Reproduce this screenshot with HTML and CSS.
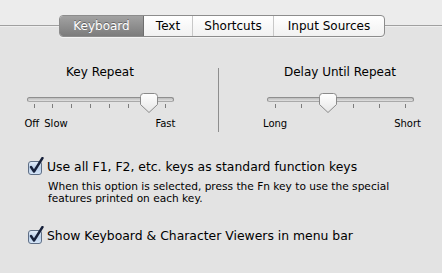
FILE: index.html
```html
<!DOCTYPE html>
<html lang="en">
<head>
    <meta charset="UTF-8">
    <title>Keyboard</title>
    <link rel="stylesheet" href="styles.css">
</head>
<body>

    <div class="tabbar">
        <div class="tabs">
            <span class="tab tab-keyboard active">Keyboard</span>
            <span class="tab tab-text">Text</span>
            <span class="tab tab-shortcuts">Shortcuts</span>
            <span class="tab tab-sources">Input Sources</span>
        </div>
    </div>

    <div class="sliders">
        <div class="slider-group">
            <div class="slider-title">Key Repeat</div>
            <div class="slider">
                <div class="track"></div>
                <div class="ticks">
                    <i></i><i></i><i></i><i></i><i></i><i></i><i></i><i></i>
                </div>
                <svg class="thumb" style="left: 113px" width="18" height="20" viewBox="0 0 18 20">
                    <defs>
                        <linearGradient id="thumbFill1" x1="0" y1="0" x2="0" y2="1">
                            <stop offset="0" stop-color="#ffffff"/>
                            <stop offset="1" stop-color="#e6e6e6"/>
                        </linearGradient>
                    </defs>
                    <path d="M3.5 0.5 H14.5 Q17.5 0.5 17.5 3.5 V11.5 L9 19.5 L0.5 11.5 V3.5 Q0.5 0.5 3.5 0.5 Z" fill="url(#thumbFill1)" stroke="#8a8a8a"/>
                </svg>
            </div>
            <div class="scale scale-repeat">
                <span>Off</span>
                <span class="slow">Slow</span>
                <span class="push">Fast</span>
            </div>
        </div>

        <div class="divider"></div>

        <div class="slider-group">
            <div class="slider-title">Delay Until Repeat</div>
            <div class="slider">
                <div class="track"></div>
                <div class="ticks ticks-wide">
                    <i></i><i></i><i></i><i></i><i></i><i></i>
                </div>
                <svg class="thumb" style="left: 52px" width="18" height="20" viewBox="0 0 18 20">
                    <defs>
                        <linearGradient id="thumbFill2" x1="0" y1="0" x2="0" y2="1">
                            <stop offset="0" stop-color="#ffffff"/>
                            <stop offset="1" stop-color="#e6e6e6"/>
                        </linearGradient>
                    </defs>
                    <path d="M3.5 0.5 H14.5 Q17.5 0.5 17.5 3.5 V11.5 L9 19.5 L0.5 11.5 V3.5 Q0.5 0.5 3.5 0.5 Z" fill="url(#thumbFill2)" stroke="#8a8a8a"/>
                </svg>
            </div>
            <div class="scale scale-delay">
                <span>Long</span>
                <span class="push">Short</span>
            </div>
        </div>
    </div>

    <div class="options">
        <div class="option">
            <label class="check-row">
                <svg class="checkbox" width="16" height="18" viewBox="0 0 16 18">
                    <defs>
                        <linearGradient id="boxFill1" x1="0" y1="0" x2="0" y2="1">
                            <stop offset="0" stop-color="#e4eefa"/>
                            <stop offset="0.5" stop-color="#b9cfea"/>
                            <stop offset="1" stop-color="#d6e6f8"/>
                        </linearGradient>
                    </defs>
                    <rect x="0.5" y="4.5" width="13" height="13" rx="2.5" fill="url(#boxFill1)" stroke="#5f6f86"/>
                    <path d="M3 10 L6 14.5 L14.5 1" fill="none" stroke="#16203a" stroke-width="2.4" stroke-linecap="round" stroke-linejoin="round"/>
                </svg>
                <span>Use all F1, F2, etc. keys as standard function keys</span>
            </label>
            <p class="note">When this option is selected, press the Fn key to use the special features printed on each key.</p>
        </div>

        <div class="option option-last">
            <label class="check-row">
                <svg class="checkbox" width="16" height="18" viewBox="0 0 16 18">
                    <defs>
                        <linearGradient id="boxFill2" x1="0" y1="0" x2="0" y2="1">
                            <stop offset="0" stop-color="#e4eefa"/>
                            <stop offset="0.5" stop-color="#b9cfea"/>
                            <stop offset="1" stop-color="#d6e6f8"/>
                        </linearGradient>
                    </defs>
                    <rect x="0.5" y="4.5" width="13" height="13" rx="2.5" fill="url(#boxFill2)" stroke="#5f6f86"/>
                    <path d="M3 10 L6 14.5 L14.5 1" fill="none" stroke="#16203a" stroke-width="2.4" stroke-linecap="round" stroke-linejoin="round"/>
                </svg>
                <span>Show Keyboard &amp; Character Viewers in menu bar</span>
            </label>
        </div>
    </div>

</body>
</html>
```

FILE: styles.css
```css
body { margin: 0; font-family: "DejaVu Sans", sans-serif; font-size: 12px; color: #000; background: linear-gradient(to bottom, #ececec 0, #ececec 25px, #a0a0a0 25px, #a0a0a0 26px, #efefef 26px, #efefef 27px, #e3e3e3 27px); height: 273px; overflow: hidden; }

.tabbar { display: flex; justify-content: center; padding-top: 15px; padding-left: 2px; }
.tabs { display: flex; height: 20px; border: 1px solid #8c8c8c; border-radius: 4px; background: linear-gradient(#ffffff, #f1f1f1); overflow: hidden; box-shadow: 0 1px 0 rgba(255,255,255,0.6); }
.tab { display: flex; align-items: center; justify-content: center; border-left: 1px solid #c8c8c8; line-height: 20px; }
.tab:first-child { border-left: none; }
.tab-keyboard { width: 83px; }
.tab-text { width: 48px; }
.tab-shortcuts { width: 80px; }
.tab-sources { width: 110px; }
.tab.active { background: linear-gradient(#a2a2a2, #7c7c7c); color: #fff; text-shadow: 0 -1px 0 rgba(0,0,0,0.35); border-right: 1px solid #6e6e6e; }
.tab.active + .tab { border-left: none; }

.sliders { display: grid; grid-template-columns: 200px 1px 206px; column-gap: 18px; margin-top: 28px; }
.slider-group { display: flex; flex-direction: column; align-items: center; }
.slider-title { line-height: 15px; }
.divider { background: #8e8e8e; height: 64px; margin-top: 3px; }

.slider { position: relative; width: 147px; height: 19px; margin-top: 13px; padding-top: 4px; box-sizing: border-box; }
.track { height: 5px; border-radius: 3px; box-sizing: border-box; border: 1px solid #8f8f8f; border-bottom-color: #a9a9a9; background: linear-gradient(#bdbdbd, #e0e0e0); }
.ticks { display: flex; justify-content: space-between; padding: 0 7px; margin-top: 2px; }
.ticks-wide { padding: 0 8px; }
.ticks i { width: 1px; height: 4px; background: #7c7c7c; }
.thumb { position: absolute; top: 0; }

.scale { display: flex; font-size: 10px; line-height: 12px; margin-top: 6px; }
.scale .push { margin-left: auto; }
.scale-repeat { width: 151px; }
.scale-repeat .slow { margin-left: 5px; }
.scale-delay { width: 158px; margin-left: 4px; }

.options { margin-top: 25px; padding-left: 28px; }
.check-row { display: flex; align-items: flex-end; gap: 3px; line-height: 15px; font-size: 12.4px; }
.checkbox { margin-bottom: -1px; flex: none; }
.note { margin: 6px 0 0 20px; font-size: 10.6px; line-height: 12px; width: 350px; }
.option-last { margin-top: 22px; }
```
